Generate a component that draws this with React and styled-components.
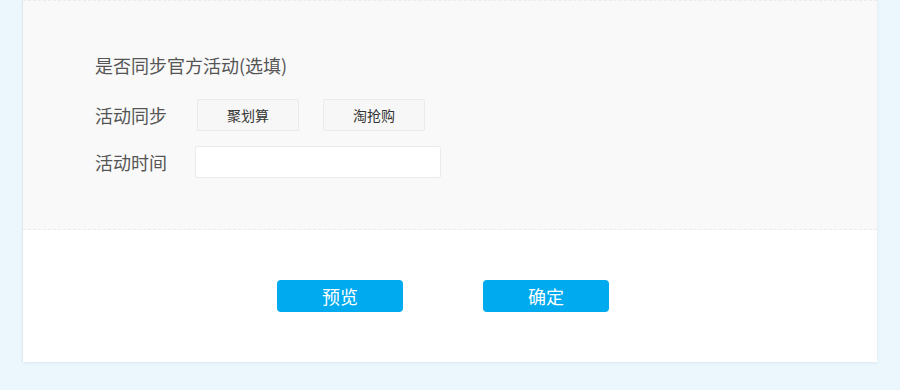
import styled, { createGlobalStyle } from "styled-components";

const GlobalStyle = createGlobalStyle`
    html, body {
        margin: 0;
        padding: 0;
        background: #ecf7fd;
        font-family: "Noto Sans CJK SC", "Noto Sans", sans-serif;
    }
`;

const Page = styled.div`
    padding: 0 23px 28px;
`;

const Card = styled.div`
    background: #fff;
    box-shadow: 0 1px 3px rgba(0, 40, 80, 0.08), -1px 0 0 #e6eef3;
`;

const SyncSection = styled.div`
    background: #f9f9f9;
    border-top: 1px dashed #ececec;
    border-bottom: 1px dashed #ececec;
    padding: 54px 72px 51px;
`;

const Title = styled.div`
    font-size: 18px;
    line-height: 20px;
    color: #555;
    margin-bottom: 24px;
`;

const Row = styled.div`
    display: flex;
    align-items: center;
    height: 32px;
    margin-bottom: ${({ $last }) => ($last ? "0" : "15px")};
`;

const Label = styled.div`
    width: 100px;
    font-size: 18px;
    color: #555;
    line-height: 20px;
`;

const Options = styled.div`
    display: flex;
    gap: 24px;
    margin-left: 2px;
`;

const OptionButton = styled.button`
    width: 102px;
    height: 32px;
    box-sizing: border-box;
    background: #f7f7f7;
    border: 1px solid #ebebeb;
    border-radius: 2px;
    font-family: inherit;
    font-size: 14px;
    color: #333;
    padding: 0;
    cursor: pointer;
`;

const DateInput = styled.input`
    width: 246px;
    height: 32px;
    box-sizing: border-box;
    background: #fff;
    border: 1px solid #ebebeb;
    border-radius: 2px;
    outline: none;
    padding: 0 8px;
`;

const Actions = styled.div`
    display: flex;
    justify-content: center;
    gap: 80px;
    padding: 50px 14px 50px 0;
`;

const ActionButton = styled.button`
    width: 126px;
    height: 32px;
    background: #00aaef;
    border: none;
    border-radius: 4px;
    color: #fff;
    font-family: inherit;
    font-size: 18px;
    line-height: 32px;
    padding: 0;
    cursor: pointer;
`;

export default function App() {
    return (
        <Page>
            <GlobalStyle />
            <Card>
                <SyncSection>
                    <Title>是否同步官方活动(选填)</Title>
                    <Row>
                        <Label>活动同步</Label>
                        <Options>
                            <OptionButton>聚划算</OptionButton>
                            <OptionButton>淘抢购</OptionButton>
                        </Options>
                    </Row>
                    <Row $last>
                        <Label>活动时间</Label>
                        <DateInput type="text" />
                    </Row>
                </SyncSection>
                <Actions>
                    <ActionButton>预览</ActionButton>
                    <ActionButton>确定</ActionButton>
                </Actions>
            </Card>
        </Page>
    );
}
